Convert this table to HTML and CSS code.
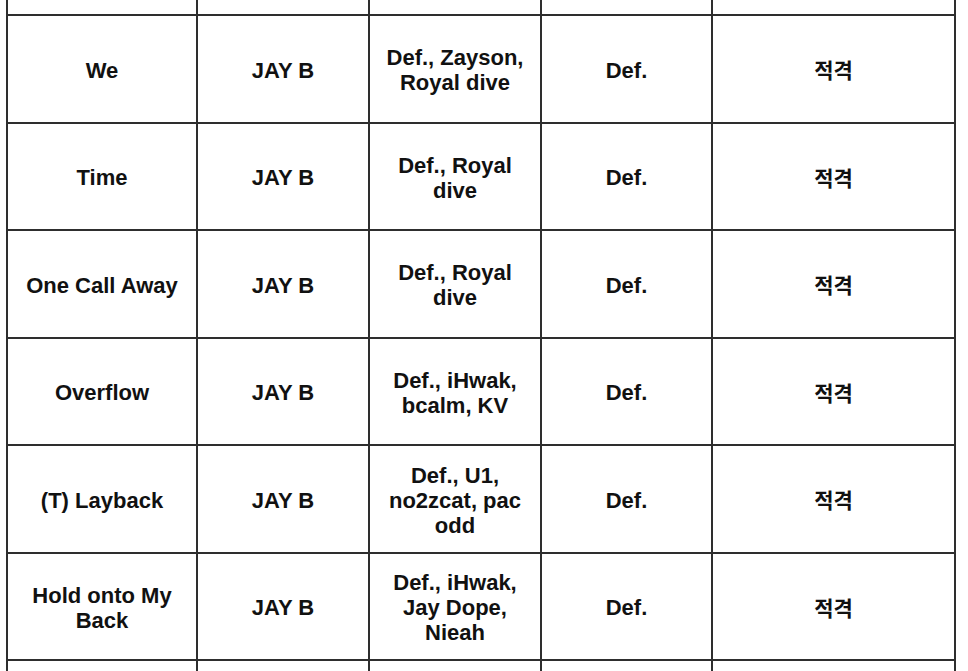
FILE: index.html
```html
<!DOCTYPE html>
<html lang="ko">
<head>
<meta charset="utf-8">
<title>Credits</title>
<link rel="stylesheet" href="styles.css">
</head>
<body>
<div class="sheet">
  <table class="credits">
    <colgroup>
      <col class="c-title">
      <col class="c-lyric">
      <col class="c-comp">
      <col class="c-arr">
      <col class="c-status">
    </colgroup>
    <tbody>
      <tr class="stub stub-top"><td></td><td></td><td></td><td></td><td></td></tr>
      <tr><td>We</td><td>JAY B</td><td>Def., Zayson, Royal dive</td><td>Def.</td><td class="ko">적격</td></tr>
      <tr><td>Time</td><td>JAY B</td><td>Def., Royal dive</td><td>Def.</td><td class="ko">적격</td></tr>
      <tr><td>One Call Away</td><td>JAY B</td><td>Def., Royal dive</td><td>Def.</td><td class="ko">적격</td></tr>
      <tr><td>Overflow</td><td>JAY B</td><td>Def., iHwak, bcalm, KV</td><td>Def.</td><td class="ko">적격</td></tr>
      <tr><td>(T) Layback</td><td>JAY B</td><td>Def., U1, no2zcat, pac odd</td><td>Def.</td><td class="ko">적격</td></tr>
      <tr><td>Hold onto My Back</td><td>JAY B</td><td>Def., iHwak, Jay Dope, Nieah</td><td>Def.</td><td class="ko">적격</td></tr>
      <tr class="stub stub-bottom"><td></td><td></td><td></td><td></td><td></td></tr>
    </tbody>
  </table>
</div>
</body>
</html>
```

FILE: styles.css
```css
html, body {
  margin: 0;
  padding: 0;
  background: #ffffff;
}

.sheet {
  width: 968px;
  height: 671px;
  overflow: hidden;
  background: #ffffff;
}

.credits {
  margin-left: 6px;
  border-collapse: collapse;
  table-layout: fixed;
  width: 950px;
  font-family: "Liberation Sans", Arial, "Noto Sans CJK KR", sans-serif;
  font-weight: bold;
  font-size: 22px;
  line-height: 25px;
  color: #111111;
}

.c-title { width: 190px; }
.c-lyric { width: 172px; }
.c-comp { width: 172px; }
.c-arr { width: 171px; }
.c-status { width: 243px; }

.credits td {
  border: 2px solid #2e2e2e;
  height: 107.5px;
  padding: 3px 5px 0;
  text-align: center;
  vertical-align: middle;
  box-sizing: border-box;
}

.credits .ko {
  font-family: "Noto Sans CJK KR", sans-serif;
  font-weight: bold;
  font-size: 21px;
  padding-top: 2px;
}

.credits .stub td {
  height: 15px;
  padding: 0;
}

.credits .stub-top td {
  border-top: none;
}

.credits .stub-bottom td {
  border-bottom: none;
  height: 20px;
}
```
